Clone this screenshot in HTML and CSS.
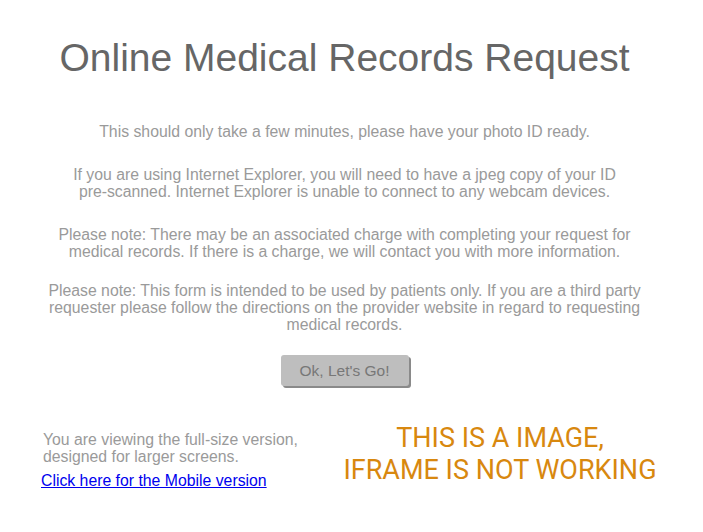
FILE: index.html
```html
<!DOCTYPE html>
<html lang="en">
<head>
  <meta charset="UTF-8">
  <title>Online Medical Records Request</title>
  <link rel="stylesheet" href="styles.css">
</head>
<body>
  <main class="page">
    <h1 class="title">Online Medical Records Request</h1>

    <section class="notes">
      <p>This should only take a few minutes, please have your photo ID ready.</p>
      <p>If you are using Internet Explorer, you will need to have a jpeg copy of your ID<br>pre-scanned. Internet Explorer is unable to connect to any webcam devices.</p>
      <p>Please note: There may be an associated charge with completing your request for<br>medical records. If there is a charge, we will contact you with more information.</p>
      <p>Please note: This form is intended to be used by patients only. If you are a third party<br>requester please follow the directions on the provider website in regard to requesting<br>medical records.</p>
    </section>

    <div class="actions">
      <button class="go-btn" type="button">Ok, Let's Go!</button>
    </div>

    <footer class="bottom">
      <div class="version">
        <p>You are viewing the full-size version,<br>designed for larger screens.</p>
        <a href="#">Click here for the Mobile version</a>
      </div>
      <div class="notice">THIS IS A IMAGE,<br>IFRAME IS NOT WORKING</div>
    </footer>
  </main>
</body>
</html>
```

FILE: styles.css
```css
:root {
  --text-dark: #666;
  --text-light: #9a9a9a;
  --accent: #d8880f;
  font-family: 'Liberation Sans', Arial, sans-serif;
}

body {
  margin: 0;
  background: #fff;
}

.page {
  width: 689px;
  display: flex;
  flex-direction: column;
}

.title {
  margin: 36px 0 0;
  text-align: center;
  font-size: 39px;
  font-weight: 400;
  color: var(--text-dark);
}

.notes {
  margin-top: 43px;
  display: flex;
  flex-direction: column;
  gap: 26px;
}

.notes p {
  margin: 0;
  text-align: center;
  font-size: 15.8px;
  line-height: 17px;
  color: var(--text-light);
}

.notes p:last-child {
  margin-top: -4px;
}

.actions {
  display: flex;
  justify-content: center;
  margin-top: 22px;
}

.go-btn {
  width: 128px;
  height: 31px;
  background: #bebebe;
  color: #777;
  border: none;
  border-radius: 3px;
  box-shadow: 2px 2px 0 #8a8a8a;
  font-family: inherit;
  font-size: 15.5px;
}

.bottom {
  display: flex;
  margin-top: 45px;
  padding-left: 41px;
}

.version {
  width: 290px;
}

.version p {
  margin: 0 0 0 2px;
  font-size: 15.8px;
  line-height: 17px;
  color: var(--text-light);
}

.version a {
  display: inline-block;
  margin-top: 7px;
  font-size: 15.8px;
  line-height: 17px;
  color: #00e;
}

.notice {
  margin-top: -9px;
  flex: 1;
  text-align: center;
  padding-right: 20px;
  font-family: 'Roboto', sans-serif;
  font-size: 27px;
  line-height: 32px;
  color: var(--accent);
}
```
